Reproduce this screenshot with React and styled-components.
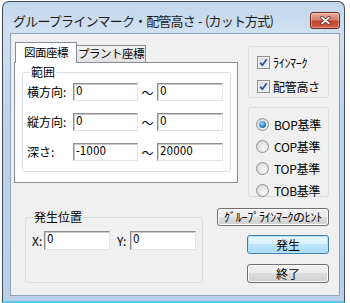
import React from 'react'
import styled, { createGlobalStyle } from 'styled-components'

const GlobalStyle = createGlobalStyle`
  html, body { margin: 0; padding: 0; background: #fff; }
  body { font-family: "Noto Sans CJK JP", "Noto Sans", sans-serif; color: #000; }
`

const Window = styled.div`
  box-sizing: border-box;
  width: 343px;
  height: 302px;
  margin: 1px 0 0 2px;
  padding: 0 4px 5px 7px;
  border: 1px solid #3f4b5a;
  border-bottom: 2px solid #5cc8ec;
  border-radius: 7px 7px 0 0;
  background: linear-gradient(180deg, #c3d7ec 0%, #cfe0f1 10%, #bdd3ea 40%, #bad0e8 100%);
  display: flex;
  flex-direction: column;
`

const TitleBar = styled.div`
  height: 31px;
  display: flex;
  justify-content: space-between;
  align-items: flex-start;
  padding-left: 3px;
`

const Title = styled.div`
  margin-top: 11px;
  font-size: 13px;
  line-height: 16px;
  letter-spacing: -0.8px;
  word-spacing: 1px;
  color: #1b1b1b;
  white-space: nowrap;
`

const CloseButton = styled.div`
  box-sizing: border-box;
  margin-top: 10px;
  width: 30px;
  height: 17px;
  border: 1px solid #6b2a20;
  border-radius: 3px;
  background: linear-gradient(180deg, #e9a99a 0%, #d98170 45%, #c4432f 55%, #d0604c 100%);
  box-shadow: inset 0 0 0 1px rgba(255, 255, 255, 0.35);
  display: flex;
  align-items: center;
  justify-content: center;
`

const Client = styled.div`
  flex: 1;
  box-sizing: border-box;
  border: 1px solid #8da2ba;
  background: #f0f0f0;
  padding: 8px 10px 0 3px;
  display: flex;
  flex-direction: column;
`

const TopRow = styled.div`
  display: flex;
  align-items: flex-start;
  gap: 10px;
`

const LeftPane = styled.div`
  width: 224px;
`

const TabStrip = styled.div`
  height: 20px;
  display: flex;
  align-items: flex-end;
  padding-left: 1px;
`

const Tab = styled.div`
  box-sizing: border-box;
  position: relative;
  width: ${p => p.$w}px;
  height: ${p => (p.$active ? 21 : 17)}px;
  margin-bottom: ${p => (p.$active ? -1 : 0)}px;
  margin-left: ${p => (p.$active ? 0 : -1)}px;
  z-index: ${p => (p.$active ? 2 : 1)};
  border: 1px solid #898c95;
  border-bottom: none;
  background: ${p => (p.$active ? '#fff' : 'linear-gradient(180deg, #f3f3f3, #e2e2e2)')};
  font-size: 11.5px;
  line-height: ${p => (p.$active ? 19 : 15)}px;
  text-align: center;
  letter-spacing: -0.5px;
  white-space: nowrap;
`

const Panel = styled.div`
  box-sizing: border-box;
  height: 121px;
  border: 1px solid #898c95;
  background: #fff;
  padding: 9px 6px 0 7px;
`

const Group = styled.div`
  box-sizing: border-box;
  position: relative;
  width: ${p => p.$w}px;
  height: ${p => p.$h}px;
  border: 1px solid #d5dfe5;
  border-radius: 3px;
  background: ${p => p.$bg || 'transparent'};
`

const Caption = styled.span`
  position: absolute;
  top: -9px;
  left: 7px;
  padding: 0 1px;
  background: ${p => p.$bg};
  font-size: 12px;
  line-height: 16px;
`

const RangeGrid = styled.div`
  display: grid;
  grid-template-columns: 46px 65px 19px 66px;
  grid-auto-rows: 18px;
  row-gap: 12px;
  padding: 10px 0 0 4px;
  align-items: center;
`

const Label = styled.span`
  font-size: 12px;
  line-height: 18px;
  white-space: nowrap;
`

const Tilde = styled.span`
  font-size: 12px;
  text-align: center;
`

const Field = styled.div`
  box-sizing: border-box;
  width: ${p => p.$w}px;
  height: ${p => p.$h || 18}px;
  background: #fff;
  border: 1px solid;
  border-color: #8e8e8e #e3e3e3 #e3e3e3 #8e8e8e;
  box-shadow: inset 1px 1px 0 #c8c8c8;
  padding: 0 2px;
  font-family: "Liberation Sans Narrow", "DejaVu Sans Condensed", "Liberation Sans", sans-serif;
  font-size: 11.5px;
  line-height: 15px;
`

const RightCol = styled.div`
  width: 81px;
  padding-top: 4px;
  display: flex;
  flex-direction: column;
  gap: 9px;
`

const OptionList = styled.div`
  display: flex;
  flex-direction: column;
  gap: ${p => p.$gap}px;
  padding: ${p => p.$pad};
`

const Option = styled.div`
  display: flex;
  align-items: center;
  gap: 3px;
  height: 13px;
  font-size: 12px;
  letter-spacing: -0.3px;
  white-space: nowrap;
`

const CheckBox = styled.span`
  box-sizing: border-box;
  width: 13px;
  height: 13px;
  border: 1px solid #8f8f8f;
  background: linear-gradient(135deg, #d6d6d6, #f6f6f6);
  box-shadow: inset 0 0 0 1px #f4f4f4;
  display: inline-flex;
  align-items: center;
  justify-content: center;
  flex: none;
`

const RadioDot = styled.span`
  box-sizing: border-box;
  position: relative;
  width: 13px;
  height: 13px;
  border-radius: 50%;
  border: 1px solid #8f8f8f;
  background: radial-gradient(circle at 60% 65%, #f8f8f8, #d2d2d2);
  flex: none;
  margin-right: 2px;
  &::after {
    content: '';
    display: ${p => (p.$on ? 'block' : 'none')};
    position: absolute;
    inset: 2px;
    border-radius: 50%;
    background: radial-gradient(circle at 40% 35%, #a8e0ff 0%, #2c82cf 55%, #17467e 100%);
  }
`

const BottomRow = styled.div`
  display: flex;
  margin-top: 11px;
`

const PosRow = styled.div`
  display: flex;
  align-items: center;
  padding: 13px 0 0 6px;
`

const AxisLabel = styled.span`
  width: ${p => p.$w}px;
  margin-left: ${p => p.$ml || 0}px;
  font-size: 12px;
`

const ButtonCol = styled.div`
  margin-left: auto;
  width: 112px;
  display: flex;
  flex-direction: column;
  align-items: flex-end;
`

const Button = styled.div`
  box-sizing: border-box;
  width: ${p => p.$w}px;
  height: ${p => p.$h}px;
  margin-top: ${p => p.$mt || 0}px;
  border: 1px solid ${p => (p.$default ? '#3c7fb1' : '#707070')};
  border-radius: 3px;
  background: ${p =>
    p.$default
      ? 'linear-gradient(180deg, #eaf6fd 0%, #d9f0fc 50%, #bee6fd 50%, #a7d9f5 100%)'
      : 'linear-gradient(180deg, #f2f2f2 0%, #ebebeb 50%, #dddddd 50%, #cfcfcf 100%)'};
  box-shadow: inset 0 0 0 1px ${p => (p.$default ? '#b5e3f9' : '#fcfcfc')};
  font-size: 12px;
  line-height: ${p => p.$h - 2}px;
  text-align: center;
  white-space: nowrap;
  letter-spacing: ${p => p.$ls || 0}px;
`

const Check = () => (
  <CheckBox>
    <svg width="9" height="9" viewBox="0 0 9 9">
      <path d="M1.2 4.6 L3.4 7.2 L7.8 1.2" fill="none" stroke="#2b4f9c" strokeWidth="1.7" />
    </svg>
  </CheckBox>
)

const rangeRows = [
  ['横方向:', '0', '0'],
  ['縦方向:', '0', '0'],
  ['深さ:', '-1000', '20000'],
]

const radios = ['BOP基準', 'COP基準', 'TOP基準', 'TOB基準']

export default function App() {
  return (
    <>
      <GlobalStyle />
      <Window>
        <TitleBar>
          <Title>グループラインマーク・配管高さ - (カット方式)</Title>
          <CloseButton>
            <svg width="11" height="9" viewBox="0 0 11 9">
              <path d="M2 1.5 L9 7.5 M9 1.5 L2 7.5" stroke="#5a1e16" strokeWidth="3.2" strokeLinecap="round" />
              <path d="M2 1.5 L9 7.5 M9 1.5 L2 7.5" stroke="#fff" strokeWidth="1.8" strokeLinecap="round" />
            </svg>
          </CloseButton>
        </TitleBar>
        <Client>
          <TopRow>
            <LeftPane>
              <TabStrip>
                <Tab $active $w={62}>図面座標</Tab>
                <Tab $w={70}>プラント座標</Tab>
              </TabStrip>
              <Panel>
                <Group $w={209} $h={100}>
                  <Caption $bg="#fff">範囲</Caption>
                  <RangeGrid>
                    {rangeRows.map(([label, from, to]) => (
                      <React.Fragment key={label}>
                        <Label>{label}</Label>
                        <Field $w={65}>{from}</Field>
                        <Tilde>～</Tilde>
                        <Field $w={66}>{to}</Field>
                      </React.Fragment>
                    ))}
                  </RangeGrid>
                </Group>
              </Panel>
            </LeftPane>
            <RightCol>
              <Group $w={81} $h={52}>
                <OptionList $gap={11} $pad="9px 0 0 8px">
                  <Option><Check />ﾗｲﾝﾏｰｸ</Option>
                  <Option><Check />配管高さ</Option>
                </OptionList>
              </Group>
              <Group $w={81} $h={90}>
                <OptionList $gap={9} $pad="10px 0 0 7px">
                  {radios.map((r, i) => (
                    <Option key={r}><RadioDot $on={i === 0} />{r}</Option>
                  ))}
                </OptionList>
              </Group>
            </RightCol>
          </TopRow>
          <BottomRow>
            <Group $w={178} $h={66} style={{ marginLeft: 11, marginTop: 9 }}>
              <Caption $bg="#f0f0f0">発生位置</Caption>
              <PosRow>
                <AxisLabel $w={12}>X:</AxisLabel>
                <Field $w={66} $h={19}>0</Field>
                <AxisLabel $w={13} $ml={7}>Y:</AxisLabel>
                <Field $w={66} $h={19}>0</Field>
              </PosRow>
            </Group>
            <ButtonCol>
              <Button $w={112} $h={18} $ls={-0.3}>ｸﾞﾙｰﾌﾟﾗｲﾝﾏｰｸのﾋﾝﾄ</Button>
              <Button $w={82} $h={19} $mt={9} $default>発生</Button>
              <Button $w={82} $h={19} $mt={10}>終了</Button>
            </ButtonCol>
          </BottomRow>
        </Client>
      </Window>
    </>
  )
}
